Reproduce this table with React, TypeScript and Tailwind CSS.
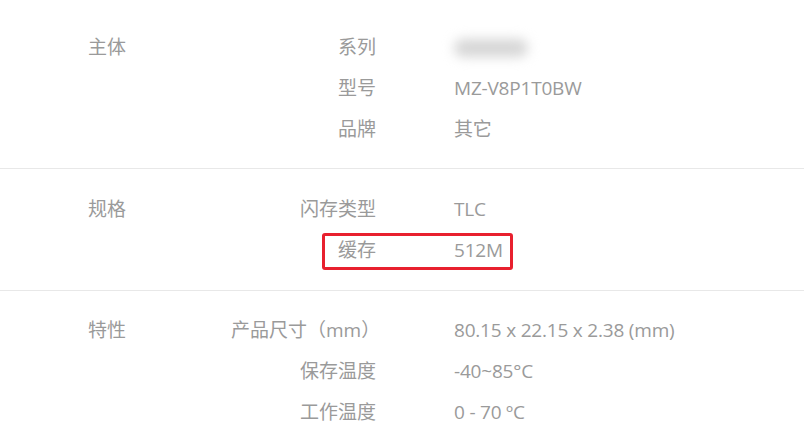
import type { ReactNode } from "react";

type Spec = { key: string; value: ReactNode; marked?: boolean };

const SECTIONS: { title: string; rows: Spec[] }[] = [
  {
    title: "主体",
    rows: [
      {
        key: "系列",
        value: <span className="block h-[18px] w-[74px] rounded-full bg-[#d6d6d6] blur-[6px]" />,
      },
      { key: "型号", value: "MZ-V8P1T0BW" },
      { key: "品牌", value: "其它" },
    ],
  },
  {
    title: "规格",
    rows: [
      { key: "闪存类型", value: "TLC" },
      { key: "缓存", value: "512M", marked: true },
    ],
  },
  {
    title: "特性",
    rows: [
      { key: "产品尺寸（mm）", value: "80.15 x 22.15 x 2.38 (mm)" },
      { key: "保存温度", value: "-40~85°C" },
      { key: "工作温度", value: "0 - 70 ºC" },
    ],
  },
];

export default function App() {
  return (
    <main className="h-[446px] w-full overflow-hidden bg-white font-['Open_Sans','Noto_Sans_CJK_SC',sans-serif] text-[19px] text-[#9a9a9a]">
      {SECTIONS.map((s, i) => (
        <section
          key={s.title}
          className={[
            "flex border-b border-[#e8e8e8]",
            i === 0 ? "pt-[27px] pb-[18px]" : i === 1 ? "pt-[20px] pb-[19px]" : "pt-[19px] pb-[19px]",
          ].join(" ")}
        >
          <div className="flex h-[41px] w-[231px] shrink-0 items-center pl-[88px]">{s.title}</div>
          <div className="flex-1">
            {s.rows.map((r) => (
              <div key={r.key} className="relative flex h-[41px] items-center">
                <div className="w-[145px] shrink-0 text-right whitespace-nowrap">{r.key}</div>
                <div className="pl-[78px] whitespace-nowrap tracking-[-0.2px]">{r.value}</div>
                {/* highlight box */}
                {r.marked && (
                  <div className="pointer-events-none absolute top-[3px] left-[91px] h-[37px] w-[191px] rounded-[3px] border-[3px] border-[#e8202e]" />
                )}
              </div>
            ))}
          </div>
        </section>
      ))}
    </main>
  );
}
